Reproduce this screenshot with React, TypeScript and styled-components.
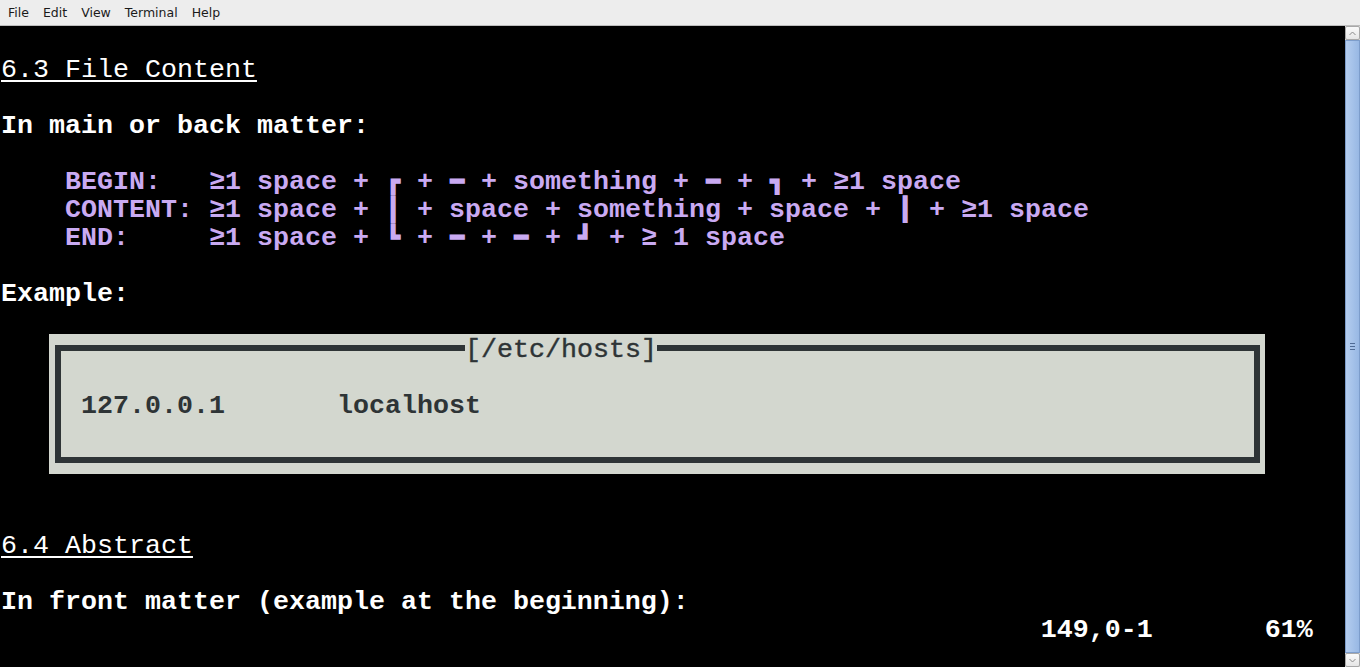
import React from "react";
import styled, { createGlobalStyle } from "styled-components";

const GlobalStyle = createGlobalStyle`
  html, body { margin: 0; padding: 0; background: #000; }
  body { width: 1360px; height: 667px; overflow: hidden; }
  #root { width: 1360px; height: 667px; }
`;

const Window = styled.div`
  width: 1360px;
  height: 667px;
  display: flex;
  flex-direction: column;
  background: #000;
`;

const MenuBar = styled.nav`
  height: 25px;
  flex: none;
  display: flex;
  align-items: center;
  padding-left: 1px;
  background: #ededed;
  border-bottom: 1px solid #bdbdbd;
  font-family: "DejaVu Sans", sans-serif;
  font-size: 12.5px;
  color: #1a1a1a;
`;

const MenuItem = styled.span`
  padding: 1px 7px 0;
  line-height: 24px;
`;

const Body = styled.div`
  flex: 1;
  display: flex;
  min-height: 0;
`;

const Screen = styled.main`
  flex: 1;
  padding-left: 1px;
  overflow: hidden;
  font-family: "Liberation Mono", "DejaVu Sans Mono", monospace;
  font-size: 26.667px;
  color: #ffffff;
`;

const Line = styled.div<{ $tone?: "white" | "purple"; $heading?: boolean }>`
  height: 28px;
  box-sizing: border-box;
  padding-top: 4px;
  line-height: 24px;
  white-space: pre;
  font-weight: ${(p) => (p.$heading ? 400 : 700)};
  color: ${(p) => (p.$tone === "purple" ? "#c9aaf2" : "#ffffff")};
`;

const Heading = styled.span`
  text-decoration: underline;
  text-decoration-thickness: 2px;
  text-underline-offset: 3px;
`;

const BoxChar = styled.span`
  display: inline-block;
  width: 16px;
  vertical-align: top;
  font-family: "DejaVu Sans Mono", monospace;
  font-weight: 700;
  font-size: 22px;
  line-height: 24px;
  text-align: center;
  -webkit-text-stroke: 1.6px currentColor;
`;

const Panel = styled.div`
  margin-left: 48px;
  width: 1216px;
  height: 140px;
  box-sizing: border-box;
  padding: 11px 5px 11px 6px;
  background: #d3d7cf;
`;

const Frame = styled.div`
  position: relative;
  height: 100%;
  box-sizing: border-box;
  border: 6px solid #2e3436;
  display: flex;
  align-items: center;
  padding: 3px 0 0 20px;
  color: #2e3436;
  font-weight: 700;
  white-space: pre;
  line-height: 28px;
`;

const FrameTitle = styled.span`
  position: absolute;
  top: -15px;
  left: 404px;
  line-height: 28px;
  background: #d3d7cf;
  color: #2e3436;
  font-weight: 400;
  -webkit-text-stroke: 0.4px currentColor;
`;

const ScrollBar = styled.aside`
  width: 15px;
  flex: none;
  display: flex;
  flex-direction: column;
  background: #d9d9d9;
`;

const ScrollButton = styled.div`
  height: 14px;
  flex: none;
  box-sizing: border-box;
  border: 1px solid #a8a8a8;
  border-radius: 2px;
  background: linear-gradient(#fafafa, #e6e6e6);
  display: flex;
  align-items: center;
  justify-content: center;
`;

const Thumb = styled.div`
  flex: 1;
  box-sizing: border-box;
  border: 1px solid #7d9dcb;
  background: linear-gradient(90deg, #b4cdef, #98b8e4);
  display: flex;
  align-items: center;
  justify-content: center;
`;

const Grip = styled.div`
  width: 5px;
  height: 7px;
  background: repeating-linear-gradient(#4f6b95 0 1px, transparent 1px 3px);
`;

const Arrow = ({ down }: { down?: boolean }) => (
  <svg width="7" height="5" viewBox="0 0 7 5">
    <path
      d={down ? "M0.5 1 L3.5 4 L6.5 1" : "M0.5 4 L3.5 1 L6.5 4"}
      fill="none"
      stroke="#8a8a8a"
      strokeWidth="1"
    />
  </svg>
);

const E = () => <Line> </Line>;

const renderSpec = (text: string) =>
  Array.from(text).map((ch, i) =>
    "┏━┓┃┗┛".includes(ch) ? <BoxChar key={i}>{ch}</BoxChar> : ch
  );

const spec = [
  "    BEGIN:   ≥1 space + ┏ + ━ + something + ━ + ┓ + ≥1 space",
  "    CONTENT: ≥1 space + ┃ + space + something + space + ┃ + ≥1 space",
  "    END:     ≥1 space + ┗ + ━ + ━ + ┛ + ≥ 1 space",
];

export default function App() {
  return (
    <>
      <GlobalStyle />
      <Window>
        <MenuBar>
          <MenuItem>File</MenuItem>
          <MenuItem>Edit</MenuItem>
          <MenuItem>View</MenuItem>
          <MenuItem>Terminal</MenuItem>
          <MenuItem>Help</MenuItem>
        </MenuBar>
        <Body>
          <Screen>
            <E />
            <Line $heading>
              <Heading>6.3 File Content</Heading>
            </Line>
            <E />
            <Line>In main or back matter:</Line>
            <E />
            {spec.map((s) => (
              <Line key={s} $tone="purple">
                {renderSpec(s)}
              </Line>
            ))}
            <E />
            <Line>Example:</Line>
            <E />
            <Panel>
              <Frame>
                <FrameTitle>[/etc/hosts]</FrameTitle>
                {"127.0.0.1       localhost"}
              </Frame>
            </Panel>
            <E />
            <E />
            <Line $heading>
              <Heading>6.4 Abstract</Heading>
            </Line>
            <E />
            <Line>In front matter (example at the beginning):</Line>
            <Line>{" ".repeat(65) + "149,0-1" + " ".repeat(7) + "61%"}</Line>
          </Screen>
          <ScrollBar>
            <ScrollButton>
              <Arrow />
            </ScrollButton>
            <Thumb>
              <Grip />
            </Thumb>
            <ScrollButton>
              <Arrow down />
            </ScrollButton>
          </ScrollBar>
        </Body>
      </Window>
    </>
  );
}
